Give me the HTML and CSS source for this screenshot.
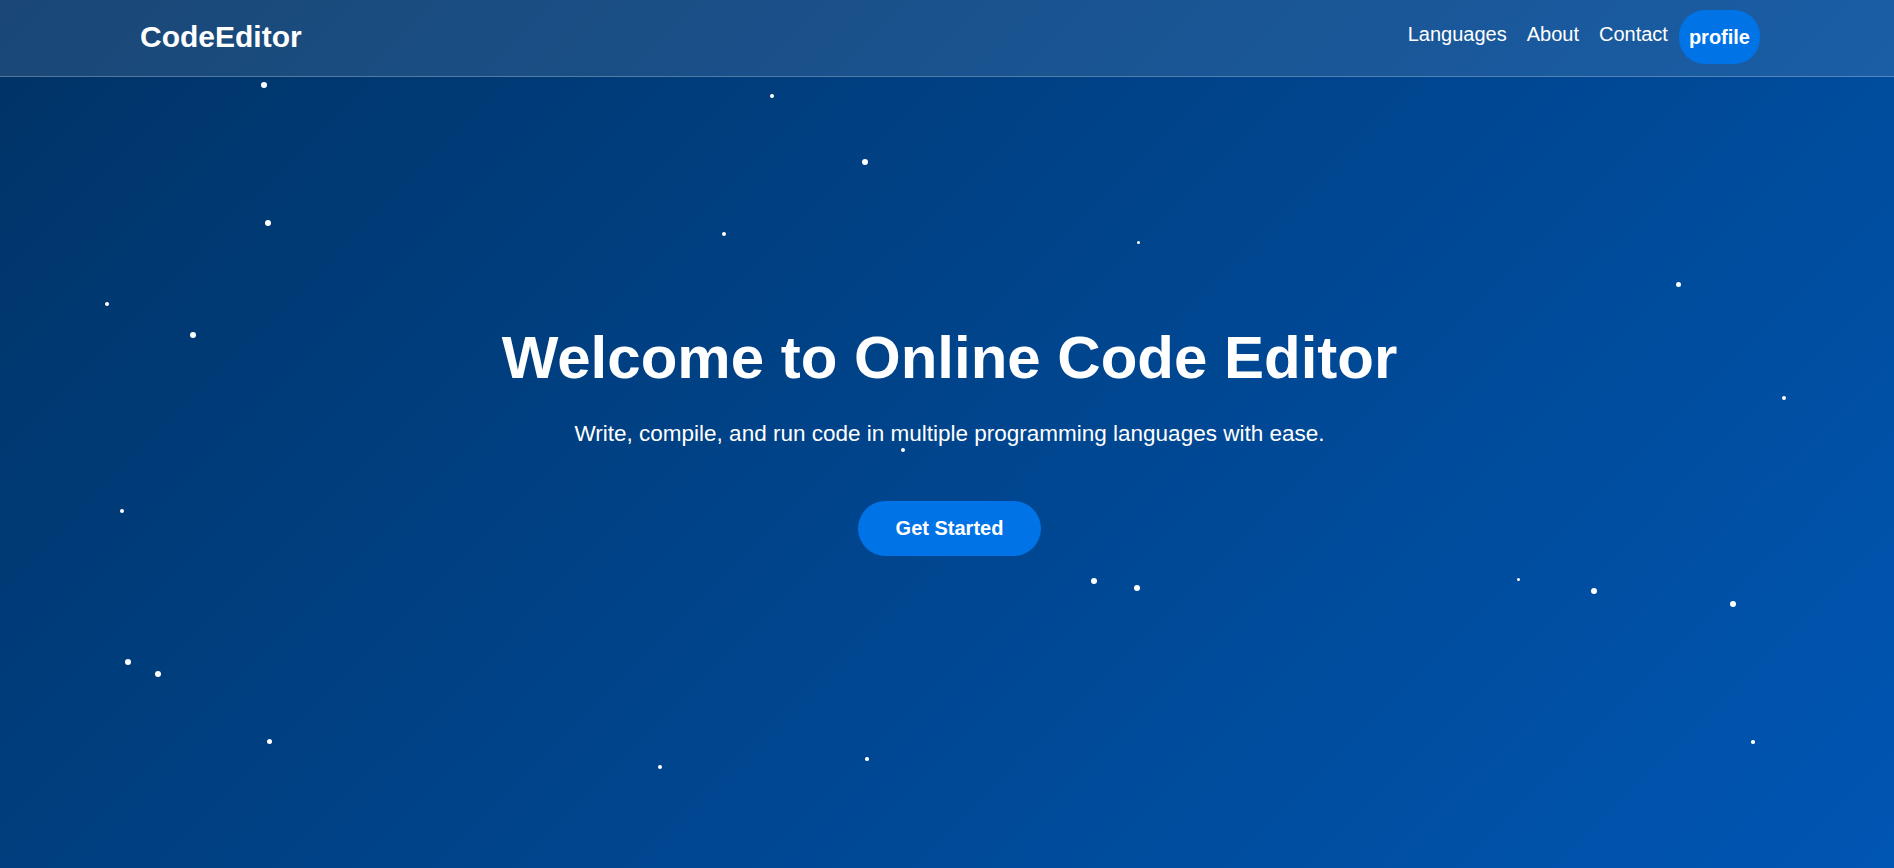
FILE: index.html
```html
<!DOCTYPE html>
<html lang="en">
<head>
<meta charset="utf-8">
<title>CodeEditor</title>
<link rel="stylesheet" href="styles.css">
</head>
<body>
<div class="stars">
  <span class="star" style="left:261px;top:82px;width:6px;height:6px"></span>
  <span class="star" style="left:770px;top:94px;width:4px;height:4px"></span>
  <span class="star" style="left:862px;top:159px;width:6px;height:6px"></span>
  <span class="star" style="left:265px;top:220px;width:6px;height:6px"></span>
  <span class="star" style="left:722px;top:232px;width:4px;height:4px"></span>
  <span class="star" style="left:1136.5px;top:240.5px;width:3px;height:3px"></span>
  <span class="star" style="left:105px;top:302px;width:4px;height:4px"></span>
  <span class="star" style="left:190px;top:332px;width:6px;height:6px"></span>
  <span class="star" style="left:1675.5px;top:281.5px;width:5px;height:5px"></span>
  <span class="star" style="left:1782px;top:396px;width:4px;height:4px"></span>
  <span class="star" style="left:901px;top:448px;width:4px;height:4px"></span>
  <span class="star" style="left:120px;top:509px;width:4px;height:4px"></span>
  <span class="star" style="left:1091px;top:578px;width:6px;height:6px"></span>
  <span class="star" style="left:1134px;top:585px;width:6px;height:6px"></span>
  <span class="star" style="left:1516.5px;top:577.5px;width:3px;height:3px"></span>
  <span class="star" style="left:1591px;top:588px;width:6px;height:6px"></span>
  <span class="star" style="left:1730px;top:601px;width:6px;height:6px"></span>
  <span class="star" style="left:125px;top:659px;width:6px;height:6px"></span>
  <span class="star" style="left:155px;top:671px;width:6px;height:6px"></span>
  <span class="star" style="left:266.5px;top:738.5px;width:5px;height:5px"></span>
  <span class="star" style="left:658px;top:765px;width:4px;height:4px"></span>
  <span class="star" style="left:865px;top:757px;width:3.5px;height:3.5px"></span>
  <span class="star" style="left:1751px;top:740px;width:3.5px;height:3.5px"></span>
</div>

<header class="site-header">
  <div class="logo">CodeEditor</div>
  <nav class="nav">
    <a class="nav-link" href="#">Languages</a>
    <a class="nav-link" href="#">About</a>
    <a class="nav-link" href="#">Contact</a>
    <a class="profile-btn" href="#">profile</a>
  </nav>
</header>

<main class="hero">
  <h1 class="hero-title">Welcome to Online Code Editor</h1>
  <p class="hero-text">Write, compile, and run code in multiple programming languages with ease.</p>
  <a class="cta" href="#">Get Started</a>
</main>
</body>
</html>
```

FILE: styles.css
```css
* {
  box-sizing: border-box;
}

html, body {
  margin: 0;
  padding: 0;
}

body {
  min-height: 100vh;
  font-family: "Liberation Sans", Arial, sans-serif;
  color: #ffffff;
  background: linear-gradient(135deg, #003366 0%, #0056b3 100%);
  overflow: hidden;
  position: relative;
}

.stars {
  position: absolute;
  inset: 0;
  pointer-events: none;
  z-index: 0;
}

.star {
  position: absolute;
  display: block;
  background: #ffffff;
  border-radius: 50%;
}

.site-header {
  position: relative;
  z-index: 1;
  height: 77px;
  display: flex;
  align-items: center;
  justify-content: space-between;
  padding: 0 134px 1px 140px;
  background: rgba(255, 255, 255, 0.1);
  border-bottom: 1px solid rgba(255, 255, 255, 0.25);
}

.logo {
  font-size: 30px;
  font-weight: 700;
  color: #ffffff;
  margin-top: -2px;
}

.nav {
  display: flex;
  align-items: center;
  margin-top: -1px;
}

.nav-link {
  color: #ffffff;
  text-decoration: none;
  font-size: 20px;
  margin-left: 20px;
  padding-bottom: 6px;
}

.profile-btn {
  margin-left: 11px;
  color: #ffffff;
  text-decoration: none;
  font-size: 20px;
  font-weight: 700;
  background: #0073e6;
  padding: 16px 10px 15px;
  border-radius: 26px;
  line-height: 23px;
}

.hero {
  position: relative;
  z-index: 1;
  display: flex;
  flex-direction: column;
  align-items: center;
  text-align: center;
  padding: 246px 0 0 5px;
}

.hero-title {
  margin: 0;
  font-size: 60px;
  font-weight: 700;
  line-height: 69px;
}

.hero-text {
  margin: 29px 0 0;
  font-size: 22.5px;
  line-height: 26px;
}

.cta {
  margin-top: 54px;
  display: inline-block;
  background: #0073e6;
  color: #ffffff;
  text-decoration: none;
  font-size: 20px;
  font-weight: 700;
  line-height: 23px;
  padding: 16px 38px;
  border-radius: 28px;
}
```
